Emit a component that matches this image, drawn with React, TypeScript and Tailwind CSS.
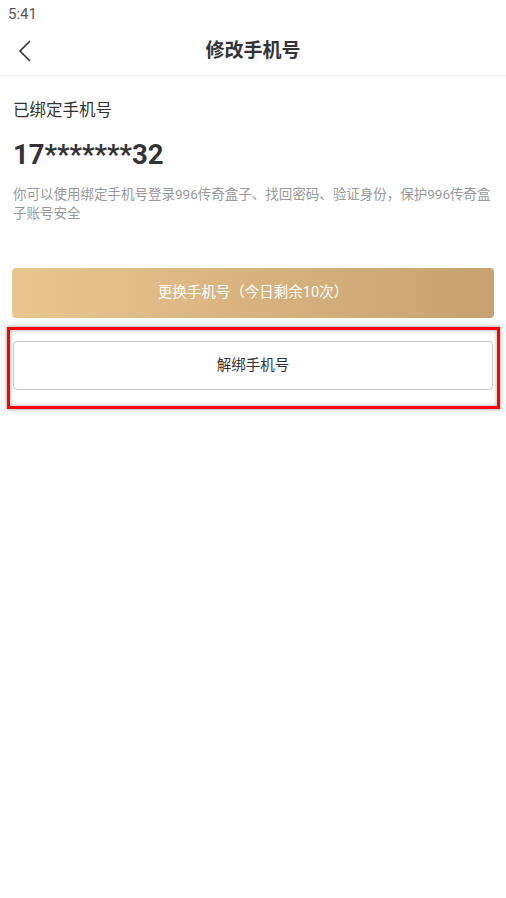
import React from "react";

export default function App() {
  const font = { fontFamily: "Roboto, 'Noto Sans CJK SC', sans-serif" };
  return (
    <div className="relative w-[506px] h-[898px] bg-white text-[#333]" style={font}>
      <div className="h-[28px] pl-[8px] pt-[4px] text-[15px] leading-[20px] text-[#555]">5:41</div>
      <div className="relative h-[48px] flex items-center justify-center border-b border-[#f2f2f2]">
        <svg className="absolute left-[18px] top-[12px]" width="14" height="22" viewBox="0 0 14 22" fill="none">
          <path d="M12 1 L2 11 L12 21" stroke="#333" strokeWidth="1.6" />
        </svg>
        <span className="text-[19px] font-bold text-[#333]">修改手机号</span>
      </div>
      <div className="px-[13px]">
        <div className="mt-[23px] text-[16.5px] leading-[24px] text-[#333]">已绑定手机号</div>
        <div className="mt-[16px] text-[27.5px] leading-[32px] font-bold text-[#333]">17*******32</div>
        <div className="mt-[14px] text-[13.5px] leading-[19px] text-[#999]">
          你可以使用绑定手机号登录996传奇盒子、找回密码、验证身份，保护996传奇盒子账号安全
        </div>
      </div>
      <div className="px-[12px] mt-[45px]">
        <div className="h-[50px] rounded-[4px] flex items-center justify-center text-white text-[14.5px] bg-gradient-to-r from-[#e9c590] to-[#c7a16f]">
          更换手机号（今日剩余10次）
        </div>
        <div className="mt-[23px] mx-[1px] h-[49px] rounded-[4px] border border-[#c8c8c8] flex items-center justify-center text-[14.5px] text-[#333]">
          解绑手机号
        </div>
      </div>
      <div className="absolute left-[7px] top-[327px] w-[493px] h-[82px] border-[3px] border-[#ff0000] shadow-[0_0_4px_rgba(0,0,0,0.45),inset_0_0_4px_rgba(0,0,0,0.35)]" />
    </div>
  );
}
